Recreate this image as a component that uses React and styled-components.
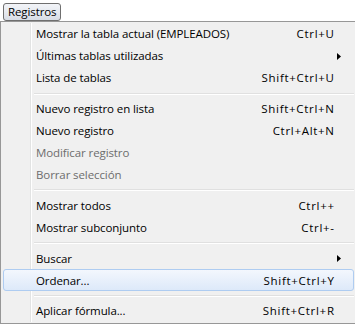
import React from 'react';
import styled, { createGlobalStyle } from 'styled-components';

const GlobalStyle = createGlobalStyle`
  html, body {
    margin: 0;
    padding: 0;
    background: #ffffff;
  }
  body {
    font-family: "Open Sans", "DejaVu Sans", sans-serif;
    font-size: 11.5px;
    letter-spacing: -0.1px;
  }
`;

const Page = styled.div`
  width: 355px;
  height: 325px;
  position: relative;
  overflow: hidden;
`;

const MenuBar = styled.div`
  display: flex;
  padding: 3px 0 0 3px;
  height: 18px;
`;

const MenuTitle = styled.div`
  height: 16px;
  padding: 0 4px;
  display: flex;
  align-items: center;
  border: 1px solid #6f6f6f;
  border-radius: 3px;
  background: linear-gradient(#f2f4f8 0%, #e6eaf0 50%, #d7dce4 100%);
  color: #000;
  line-height: 16px;
`;

const Dropdown = styled.div`
  width: 351px;
  height: 299px;
  border: 1px solid #979797;
  background: #f0f0f0;
  display: flex;
  flex-direction: column;
  padding: 1px 2px;
  position: relative;
  box-sizing: content-box;

  &::before {
    content: '';
    position: absolute;
    top: 1px;
    bottom: 1px;
    left: 29px;
    width: 1px;
    background: #e2e3e3;
    box-shadow: 1px 0 0 #ffffff;
  }
`;

const Item = styled.div`
  position: relative;
  height: 22px;
  display: flex;
  align-items: center;
  padding: 0 19px 0 32px;
  color: ${({ $disabled }) => ($disabled ? '#6d6d6d' : '#000000')};
  border: 1px solid transparent;
  border-radius: 3px;
  box-sizing: border-box;
  ${({ $active }) =>
    $active &&
    `
    border-color: #aeccf1;
    background: linear-gradient(#f3f7fd 0%, #e8f0fb 50%, #dde9f9 100%);
  `}
`;

const Label = styled.span`
  flex: 1;
  white-space: nowrap;
`;

const Shortcut = styled.span`
  white-space: nowrap;
  letter-spacing: 0.7px;
  margin-right: -0.7px;
`;

const Arrow = styled.svg`
  position: absolute;
  right: 12px;
  top: 7px;
`;

const Separator = styled.div`
  height: 9px;
  display: flex;
  align-items: center;
  padding-left: 31px;

  &::after {
    content: '';
    flex: 1;
    height: 1px;
    background: #e0e0e0;
    box-shadow: 0 1px 0 #ffffff;
  }
`;

const items = [
  { label: 'Mostrar la tabla actual (EMPLEADOS)', key: 'Ctrl+U' },
  { label: 'Últimas tablas utilizadas', sub: true },
  { label: 'Lista de tablas', key: 'Shift+Ctrl+U' },
  { sep: true },
  { label: 'Nuevo registro en lista', key: 'Shift+Ctrl+N' },
  { label: 'Nuevo registro', key: 'Ctrl+Alt+N' },
  { label: 'Modificar registro', disabled: true },
  { label: 'Borrar selección', disabled: true },
  { sep: true },
  { label: 'Mostrar todos', key: 'Ctrl++' },
  { label: 'Mostrar subconjunto', key: 'Ctrl+-' },
  { sep: true },
  { label: 'Buscar', sub: true },
  { label: 'Ordenar...', key: 'Shift+Ctrl+Y', active: true },
  { sep: true },
  { label: 'Aplicar fórmula...', key: 'Shift+Ctrl+R' },
];

export default function App() {
  return (
    <Page>
      <GlobalStyle />
      <MenuBar>
        <MenuTitle>Registros</MenuTitle>
      </MenuBar>
      <Dropdown>
        {items.map((it, i) =>
          it.sep ? (
            <Separator key={i} />
          ) : (
            <Item key={i} $disabled={it.disabled} $active={it.active}>
              <Label>{it.label}</Label>
              {it.key && <Shortcut>{it.key}</Shortcut>}
              {it.sub && (
                <Arrow width="4" height="7" viewBox="0 0 4 7">
                  <path d="M0 0 L4 3.5 L0 7 Z" fill="#000" />
                </Arrow>
              )}
            </Item>
          )
        )}
      </Dropdown>
    </Page>
  );
}
